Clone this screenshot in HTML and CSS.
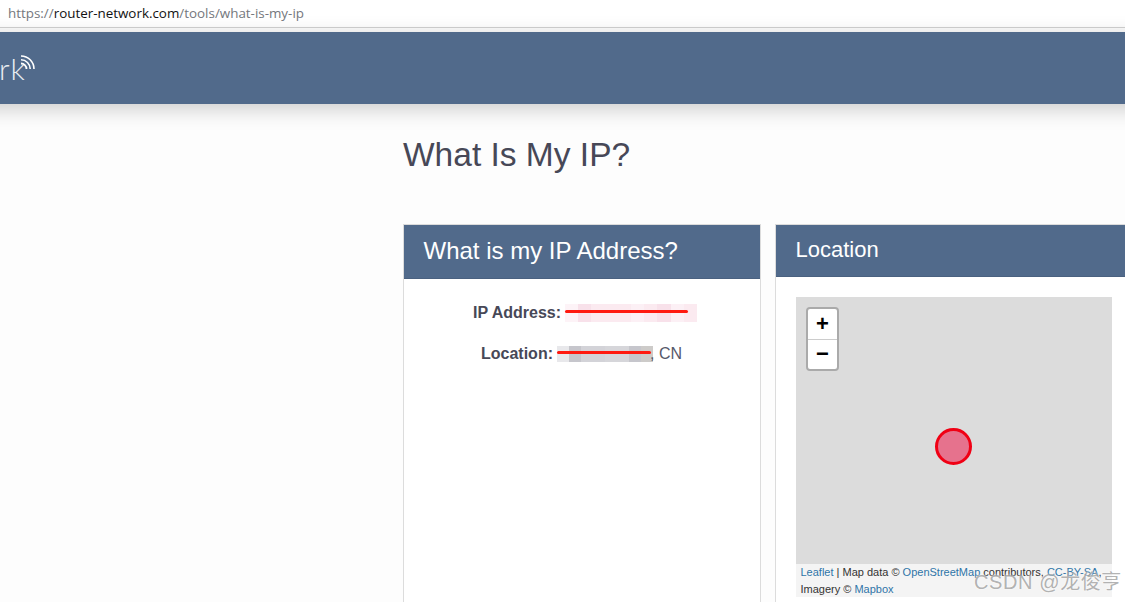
FILE: index.html
```html
<!DOCTYPE html>
<html lang="en">
<head>
<meta charset="utf-8">
<title>What Is My IP?</title>
<link rel="stylesheet" href="styles.css">
</head>
<body>
<div class="urlbar"><span class="dim">https://</span>router-network.com<span class="dim">/tools/what-is-my-ip</span></div>
<header class="site-header">
  <div class="logo">
    <span class="logo-text">rk</span>
    <svg class="wifi" width="16" height="15" viewBox="0 0 16 15" fill="none" stroke="#fff">
      <path d="M1 8.5a5.5 5.5 0 0 1 5.5 5.5" stroke-width="1.8"/>
      <path d="M1 4.8a9.2 9.2 0 0 1 9.2 9.2" stroke-width="1.6"/>
      <path d="M1 1a13 13 0 0 1 13 13" stroke-width="1.6"/>
    </svg>
  </div>
</header>
<main class="content">
  <h1 class="title">What Is My IP?</h1>
  <div class="panels">
    <section class="panel panel-ip">
      <h2 class="panel-head head-ip">What is my IP Address?</h2>
      <div class="panel-body info">
        <p class="row row-ip"><b>IP Address:</b>
          <span class="redact pink"><i></i><i></i><i></i><i></i><i></i><i></i><i></i><i></i><i></i><i></i><u class="line"></u></span>
        </p>
        <p class="row row-loc"><b>Location:</b>
          <span class="redact grey"><i></i><i></i><i></i><i></i><i></i><i></i><i></i><i></i><u class="line"></u></span><span class="cn">, CN</span>
        </p>
      </div>
    </section>
    <section class="panel panel-map">
      <h2 class="panel-head head-map">Location</h2>
      <div class="panel-body map-wrap">
        <div class="map">
          <div class="zoom"><span class="zoom-btn plus">+</span><span class="zoom-btn minus">−</span></div>
          <div class="marker"></div>
          <div class="attribution"><a>Leaflet</a> | Map data © <a>OpenStreetMap</a> contributors, <a>CC-BY-SA</a>, Imagery © <a>Mapbox</a></div>
        </div>
      </div>
    </section>
  </div>
</main>
<div class="watermark">CSDN @龙俊亨</div>
</body>
</html>
```
FILE: styles.css
```css
* { box-sizing: border-box; }
html, body { margin: 0; height: 100%; overflow: hidden; }
body { width: 1125px; height: 602px; background: #fdfdfd; font-family: "Liberation Sans", Arial, sans-serif; position: relative; }

.urlbar { height: 28px; padding: 5px 0 0 8px; background: #fff; border-bottom: 1px solid #d2d2d2; font: 13.4px/17px "Open Sans", sans-serif; color: #111; white-space: nowrap; }
.dim { color: #74777c; }

.site-header { height: 72px; margin: 4px -40px 0; padding-left: 40px; background: #516a8b; box-shadow: 0 5px 20px rgba(0,0,0,.2); display: flex; align-items: flex-start; }
.logo { display: flex; align-items: flex-start; }
.logo-text { font: 300 30px/30px Lato, sans-serif; color: #e9edf2; margin-top: 21px; letter-spacing: 1px; margin-left: -1px; }
.wifi { margin-top: 23px; margin-left: -6px; }

.content { padding: 30px 0 0 403px; }
.title { margin: 0; font-size: 33.5px; line-height: 42px; font-weight: 400; color: #474857; white-space: nowrap; }
.panels { display: flex; gap: 14px; margin-top: 48px; align-items: flex-start; }
.panel { background: #fff; border: 1px solid #dcdcdc; height: 400px; flex: none; }
.panel-ip { width: 358px; }
.panel-map { width: 358px; }
.panel-head { margin: 0; background: #516a8b; color: #fff; font-weight: 400; padding-left: 19.5px; }
.head-ip { height: 54px; font-size: 24px; line-height: 52px; border-bottom: 1px solid #4a6180; }
.head-map { height: 52px; font-size: 22px; line-height: 49px; border-bottom: 1px solid #4a6180; }

.info { padding-top: 23px; text-align: center; color: #474857; font-size: 16px; }
.row { margin: 0; height: 21px; display: flex; align-items: center; white-space: nowrap; }
.row b { font-weight: 700; }
.row-ip { padding-left: 69px; }
.row-loc { margin-top: 20px; padding-left: 77px; }

.redact { position: relative; display: inline-flex; height: 18px; margin-left: 4px; align-items: stretch; }
.redact i { display: block; height: 100%; }
.pink { width: 132px; }
.pink i { flex: 1; background: #fbeaf0; }
.pink i:nth-child(2), .pink i:nth-child(8) { background: #f8e1ea; }
.pink i:nth-child(1) { background: #fdf3f7; }
.pink i:nth-child(6), .pink i:nth-child(9) { background: #fcf0f5; }
.grey { width: 96px; height: 16px; margin-left: 4px; }
.grey i { flex: 1; background: #d3d3d8; }
.grey i:nth-child(1) { background: #e8e8eb; }
.grey i:nth-child(2), .grey i:nth-child(7) { background: #c6c6cc; }
.grey i:nth-child(5), .grey i:nth-child(6) { background: #d6d6da; }
.grey i:nth-child(8) { background: #cdcbc9; }
.line { position: absolute; left: 0; height: 3px; background: #ff1a10; border-radius: 2px; }
.pink .line { top: 6px; width: 123px; }
.grey .line { top: 5px; width: 94px; }
.cn { margin-left: -3px; font-size: 16px; color: #56586a; position: relative; }

.map-wrap { padding: 19px 0 0 20px; }
.map { position: relative; width: 316px; height: 300px; margin-top: 1px; background: #dcdcdc; }
.zoom { position: absolute; left: 10px; top: 10px; width: 33px; height: 64px; border: 2px solid #aaa; border-radius: 4px; background: #fff; display: flex; flex-direction: column; overflow: hidden; }
.zoom-btn { flex: 1; display: flex; align-items: center; justify-content: center; color: #000; font-weight: 700; font-size: 22px; line-height: 1; }
.plus { border-bottom: 1px solid #ccc; }
.marker { position: absolute; left: 139px; top: 131px; width: 37px; height: 37px; border-radius: 50%; border: 3px solid #f00014; background: #e6728d; }
.attribution { position: absolute; left: 0; right: 0; bottom: 0; height: 33px; padding: 0 4.5px; background: #f4f4f4; color: #333; font-size: 11px; line-height: 17px; }
.attribution a { color: #2f74a8; }

.watermark { position: absolute; left: 974px; top: 567px; font: 20px/30px "Liberation Sans", "Noto Sans CJK SC", sans-serif; color: rgba(130,130,130,.62); letter-spacing: .6px; text-shadow: 0 0 2px #fff; white-space: nowrap; }
```
